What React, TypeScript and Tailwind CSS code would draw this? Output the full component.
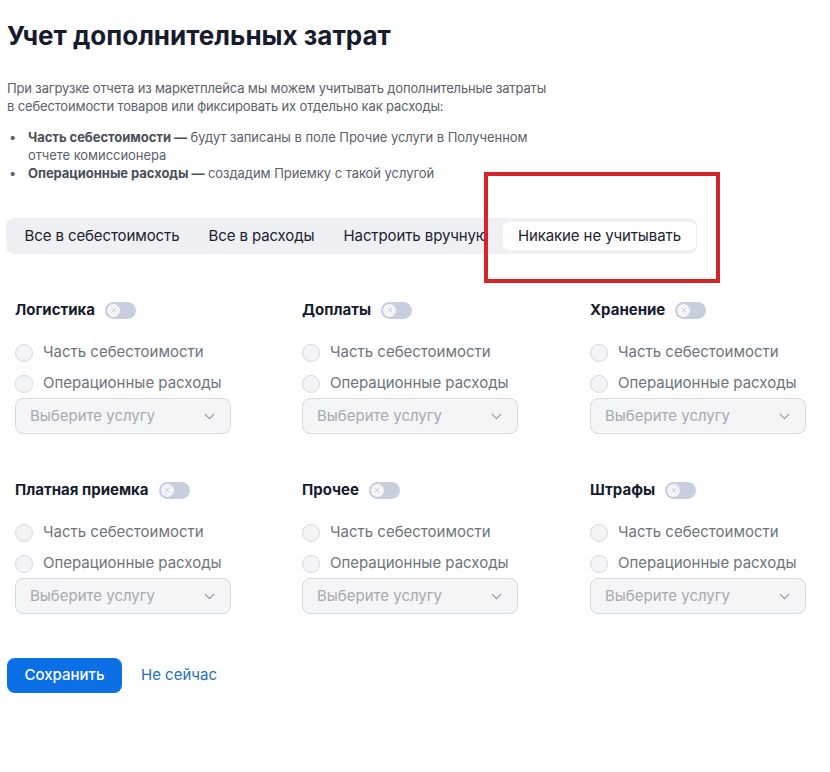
import { ChevronDown, X } from "lucide-react";

const tabs = ["Все в себестоимость", "Все в расходы", "Настроить вручную", "Никакие не учитывать"];

const groups = ["Логистика", "Доплаты", "Хранение", "Платная приемка", "Прочее", "Штрафы"];

function Toggle() {
  return (
    <span className="ml-[10px] inline-flex h-[17px] w-[31px] items-center rounded-full bg-[#c8cedd] px-[2px]">
      <span className="flex h-[13px] w-[13px] items-center justify-center rounded-full bg-[#f4f5f8]">
        <X size={8} strokeWidth={2} className="text-[#b8bdc9]" />
      </span>
    </span>
  );
}

function Radio({ label }: { label: string }) {
  return (
    <label className="flex h-[31px] items-center gap-[10px]">
      <span className="h-[18px] w-[18px] rounded-full border border-[#d6d9df] bg-[#f3f4f6]" />
      <span className="text-[15px] text-[#6f737b]">{label}</span>
    </label>
  );
}

function Group({ title }: { title: string }) {
  return (
    <div className="flex w-[216px] flex-col">
      <div className="flex h-[24px] items-center">
        <span className="text-[15px] font-bold text-[#161c2d]">{title}</span>
        <Toggle />
      </div>
      <div className="mt-[15px] flex flex-col">
        <Radio label="Часть себестоимости" />
        <Radio label="Операционные расходы" />
      </div>
      <div className="-mt-[1px] flex h-[36px] items-center justify-between rounded-[8px] border border-[#d7dae0] bg-[#f4f5f7] pl-[14px] pr-[12px]">
        <span className="text-[15px] text-[#a6aab3]">Выберите услугу</span>
        <ChevronDown size={17} strokeWidth={1.5} className="text-[#8b909a]" />
      </div>
    </div>
  );
}

export default function App() {
  return (
    <div className="relative min-h-[772px] w-[830px] bg-white px-[7px] pt-[18px] font-['Inter',sans-serif]">
      <h1 className="text-[26px] font-bold leading-[36px] text-[#161c2d]">Учет дополнительных затрат</h1>

      <p className="mt-[25px] text-[13px] leading-[18px] tracking-[-0.15px] text-[#5b606a]">
        При загрузке отчета из маркетплейса мы можем учитывать дополнительные затраты
        <br />
        в себестоимости товаров или фиксировать их отдельно как расходы:
      </p>

      <ul className="mt-[13px] text-[13px] leading-[18px] tracking-[-0.05px] text-[#5b606a]">
        <li className="flex">
          <span className="w-[21px] pl-[2px]">•</span>
          <span>
            <b className="font-bold text-[#4a4f59]">Часть себестоимости —</b> будут записаны в поле Прочие услуги в Полученном
            <br />
            отчете комиссионера
          </span>
        </li>
        <li className="flex">
          <span className="w-[21px] pl-[2px]">•</span>
          <span>
            <b className="font-bold text-[#4a4f59]">Операционные расходы —</b> создадим Приемку с такой услугой
          </span>
        </li>
      </ul>

      <div className="mt-[36px] flex h-[36px] w-[691px] -translate-x-[1px] items-center rounded-[8px] bg-[#eef0f4] px-[4px]">
        {tabs.map((t, i) => (
          <div
            key={t}
            className={
              i === 3
                ? "flex h-[28px] items-center whitespace-nowrap rounded-[6px] bg-white px-[15px] text-[15px] tracking-[-0.1px] text-[#1d2230]"
                : "flex h-[28px] items-center whitespace-nowrap px-[14.5px] text-[15px] tracking-[-0.1px] text-[#1d2230]"
            }
          >
            {t}
          </div>
        ))}
      </div>

      <div className="ml-[8px] mt-[44px] grid grid-cols-[287px_288px_216px] gap-y-[44px]">
        {groups.map((g) => (
          <Group key={g} title={g} />
        ))}
      </div>

      <div className="mt-[44px] flex items-center gap-[19px]">
        <button className="h-[35px] w-[115px] rounded-[8px] bg-[#0b6fe6] text-[15px] font-medium text-white">
          Сохранить
        </button>
        <span className="text-[15px] text-[#1f6fc2]">Не сейчас</span>
      </div>

      <div className="absolute left-[484px] top-[172px] h-[111px] w-[236px] border-[4px] border-[#d8232a]" />
    </div>
  );
}
